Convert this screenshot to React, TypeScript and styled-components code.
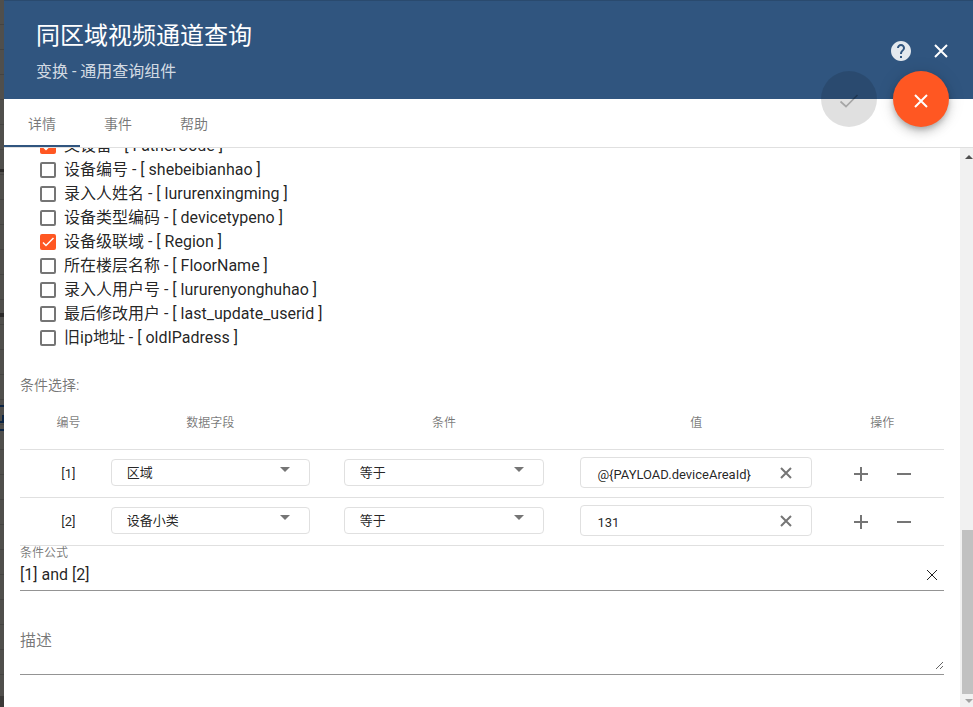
import React, { useState } from "react";
import styled, { createGlobalStyle } from "styled-components";

const navy = "#30557f";
const accent = "#ff5722";
const ink = "rgba(0, 0, 0, 0.87)";
const muted = "rgba(0, 0, 0, 0.54)";
const line = "#e0e0e0";

const GlobalStyle = createGlobalStyle`
  *, *::before, *::after { box-sizing: border-box; }
  html, body, #root { height: 100%; }
  body {
    margin: 0;
    overflow: hidden;
    color: ${ink};
    font-family: Roboto, "Noto Sans CJK SC", sans-serif;
    font-size: 16px;
  }
  button, input, select, textarea { font-family: inherit; color: inherit; }
`;

const Page = styled.div`
  display: flex;
  height: 100vh;
`;

const Backdrop = styled.div`
  flex: 0 0 4px;
  overflow: hidden;
  background:
    linear-gradient(
      transparent 169px, #2b2a29 169px 172px, transparent 172px 313px,
      #2b2a29 313px 317px, transparent 317px 405px,
      #0c2544 405px 407px, transparent 407px 421px,
      #0c2544 421px 423px, transparent 423px 429px,
      #0c2544 429px 431px, transparent 431px 696px, #3b3a38 696px
    ),
    linear-gradient(90deg, transparent 2px, #0c2544 2px) 0 415px / 4px 6px no-repeat,
    repeating-linear-gradient(#504f4c 0 24px, #454442 24px 25px);
`;

const Panel = styled.main`
  flex: 1;
  min-width: 0;
  display: flex;
  flex-direction: column;
  background: #fff;
`;

const Header = styled.header`
  position: relative;
  flex: none;
  display: flex;
  justify-content: space-between;
  align-items: center;
  height: 99px;
  padding: 2px 20px 0 32px;
  color: #fff;
  background: ${navy};
  border-top: 1px solid #2a4a6e;
`;

const Title = styled.h1`
  margin: 0;
  font-size: 24px;
  line-height: 36px;
  font-weight: 400;
`;

const Subtitle = styled.p`
  margin: 4px 0 0;
  font-size: 16px;
  line-height: 28px;
  color: rgba(255, 255, 255, 0.8);
`;

const Heading = styled.div`
  padding-top: 2px;
`;

const HeaderActions = styled.div`
  display: flex;
  gap: 16px;
`;

const IconButton = styled.button<{ $size?: number }>`
  display: inline-flex;
  align-items: center;
  justify-content: center;
  flex: none;
  width: ${({ $size = 24 }) => $size}px;
  height: ${({ $size = 24 }) => $size}px;
  padding: 0;
  border: 0;
  background: none;
  cursor: pointer;
`;

const FabGroup = styled.div`
  position: absolute;
  right: 24px;
  bottom: -28px;
  display: flex;
  gap: 16px;
`;

const Fab = styled.button`
  display: flex;
  align-items: center;
  justify-content: center;
  width: 56px;
  height: 56px;
  padding: 4px 0 0;
  border: 0;
  border-radius: 50%;
  color: #fff;
  background: ${accent};
  box-shadow: 0 3px 5px -1px rgba(0, 0, 0, 0.2), 0 6px 10px rgba(0, 0, 0, 0.14),
    0 1px 18px rgba(0, 0, 0, 0.12);
  &:disabled {
    color: rgba(0, 0, 0, 0.26);
    background: rgba(0, 0, 0, 0.12);
    box-shadow: none;
  }
`;

const Tabs = styled.nav`
  flex: none;
  display: flex;
  height: 49px;
  border-bottom: 1px solid ${line};
`;

const Tab = styled.button<{ $active?: boolean }>`
  height: 48px;
  padding: 2px 24px 0;
  border: 0;
  border-bottom: 2px solid ${({ $active }) => ($active ? navy : "transparent")};
  background: none;
  color: ${muted};
  font-size: 14px;
`;

const Body = styled.div`
  flex: 1;
  min-height: 0;
  display: flex;
`;

const Viewport = styled.div`
  flex: 1;
  min-width: 0;
  display: flex;
  flex-direction: column;
  justify-content: flex-end;
  overflow: hidden;
  padding: 0 16px 32px;
`;

const FieldList = styled.ul`
  list-style: none;
  margin: 0;
  padding: 0 0 0 20px;
`;

const FieldOption = styled.label`
  display: flex;
  align-items: center;
  gap: 8px;
  height: 24px;
  line-height: 24px;
`;

const Tick = styled.input`
  appearance: none;
  width: 16px;
  height: 16px;
  margin: 0;
  border: 2px solid #757575;
  border-radius: 2px;
  &:checked {
    border-color: ${accent};
    background: ${accent};
  }
`;

const TickBox = styled.span`
  display: grid;
  flex: none;
  > * { grid-area: 1 / 1; }
  svg { pointer-events: none; z-index: 1; }
  input:not(:checked) + svg { visibility: hidden; }
`;

const SectionLabel = styled.h2`
  margin: 24px 0 0;
  padding-top: 2px;
  font-size: 14px;
  line-height: 18px;
  font-weight: 400;
  color: ${muted};
`;

const Table = styled.table`
  width: 100%;
  table-layout: fixed;
  border-collapse: separate;
  border-spacing: 0;
`;

const HeadCell = styled.th<{ $width: string }>`
  width: ${({ $width }) => $width};
  height: 56px;
  padding: 0;
  border-bottom: 1px solid ${line};
  font-size: 12px;
  font-weight: 400;
  color: ${muted};
  text-align: center;
  &:first-child { padding-left: 22px; }
  &:last-child { padding-right: 10px; }
`;

const Cell = styled.td`
  height: 48px;
  padding: 0 18px;
  border-bottom: 1px solid ${line};
  font-size: 13px;
  text-align: center;
  &:first-child { padding: 0 0 0 22px; }
  &:nth-child(2) { padding: 0 16px; }
  &:last-child { padding: 0 10px 0 0; }
`;

const Picker = styled.div`
  display: grid;
  align-items: center;
  height: 27px;
  margin-bottom: 2px;
  border: 1px solid ${line};
  border-radius: 4px;
  > * { grid-area: 1 / 1; }
  > svg {
    justify-self: end;
    margin: 0 19px 6px 0;
    pointer-events: none;
  }
`;

const Select = styled.select`
  appearance: none;
  width: 100%;
  height: 25px;
  padding: 0 32px 0 15px;
  border: 0;
  background: none;
  font-size: 13px;
`;

const ValueBox = styled.div`
  display: flex;
  align-items: center;
  height: 31px;
  margin-bottom: 2px;
  padding: 0 16px;
  border: 1px solid ${line};
  border-radius: 4px;
  color: ${muted};
`;

const ValueInput = styled.input`
  flex: 1;
  min-width: 0;
  height: 28px;
  padding: 4px 0 0;
  border: 0;
  outline: 0;
  background: none;
  font-size: 13px;
  color: ${ink};
`;

const RowActions = styled.div`
  display: flex;
  justify-content: center;
  gap: 19px;
  color: ${muted};
`;

const FieldLabel = styled.label`
  display: block;
  font-size: 12px;
  line-height: 14px;
  color: ${muted};
`;

const Underlined = styled.div`
  display: flex;
  align-items: center;
  height: 31px;
  border-bottom: 1px solid #949494;
`;

const FormulaInput = styled.input`
  flex: 1;
  min-width: 0;
  height: 30px;
  padding: 0 0 2px;
  border: 0;
  outline: 0;
  background: none;
  font-size: 16px;
`;

const DescriptionField = styled.div`
  margin-top: 36px;
  padding-bottom: 4px;
  border-bottom: 1px solid #949494;
`;

const Description = styled.textarea`
  display: block;
  width: 100%;
  height: 43px;
  padding: 2px 0 0;
  border: 0;
  outline: 0;
  resize: vertical;
  background: none;
  font-size: 16px;
  line-height: 24px;
  &::placeholder { color: ${muted}; }
`;

const ScrollRail = styled.div`
  flex: 0 0 13px;
  display: flex;
  flex-direction: column;
  overflow: hidden;
  background: #f1f1f1;
`;

const ScrollStep = styled.div<{ $height: number }>`
  flex: none;
  display: grid;
  place-items: center;
  width: 17px;
  height: ${({ $height }) => $height}px;
`;

const ScrollTrack = styled.div`
  flex: 1;
  display: flex;
  align-items: flex-end;
  padding: 0 0 0 2px;
`;

const ScrollThumb = styled.div`
  width: 100%;
  height: 31%;
  background: #c1c1c1;
`;

const CrossIcon = ({ span = 14, stroke = 2 }: { span?: number; stroke?: number }) => (
  <svg width={span} height={span} viewBox={`0 0 ${span} ${span}`} fill="none" stroke="currentColor" strokeWidth={stroke}>
    <path d={`M1 1 L${span - 1} ${span - 1} M${span - 1} 1 L1 ${span - 1}`} />
  </svg>
);

const HelpIcon = () => (
  <svg width="24" height="24" viewBox="0 0 24 24" fill="#fff" fillOpacity="0.87">
    <path d="M12 2C6.48 2 2 6.48 2 12s4.48 10 10 10 10-4.48 10-10S17.52 2 12 2zm1 17h-2v-2h2v2zm2.07-7.75l-.9.92C13.45 12.9 13 13.5 13 15h-2v-.5c0-1.1.45-2.1 1.17-2.83l1.24-1.26c.37-.36.59-.86.59-1.41 0-1.1-.9-2-2-2s-2 .9-2 2H8c0-2.21 1.79-4 4-4s4 1.79 4 4c0 .88-.36 1.68-.93 2.25z" />
  </svg>
);

const CheckIcon = () => (
  <svg width="20" height="16" viewBox="0 0 20 16" fill="none" stroke="currentColor" strokeWidth="1.7">
    <path d="M1.5 8.5 L7 13.5 L18.5 2" />
  </svg>
);

const TickMark = () => (
  <svg width="16" height="16" viewBox="0 0 16 16" fill="none" stroke="#fff" strokeWidth="1.5">
    <path d="M3 8.5 L6 11.5 L13.5 4" />
  </svg>
);

const DropIcon = () => (
  <svg width="10" height="5" viewBox="0 0 10 5" fill="#757575">
    <path d="M0 0H10L5 5Z" />
  </svg>
);

const SignIcon = ({ plus }: { plus?: boolean }) => (
  <svg width="14" height="14" viewBox="0 0 14 14" fill="currentColor">
    <path d={plus ? "M6 0H8V6H14V8H8V14H6V8H0V6H6Z" : "M0 6H14V8H0Z"} />
  </svg>
);

const ScrollArrow = ({ down }: { down?: boolean }) => (
  <svg width="8" height="4" viewBox="0 0 8 4" fill={down ? "#a3a3a3" : "#505050"}>
    <path d={down ? "M0 0H8L4 4Z" : "M0 4H8L4 0Z"} />
  </svg>
);

const fields = [
  { name: "父设备", code: "FatherCode", checked: true },
  { name: "设备编号", code: "shebeibianhao" },
  { name: "录入人姓名", code: "lururenxingming" },
  { name: "设备类型编码", code: "devicetypeno" },
  { name: "设备级联域", code: "Region", checked: true },
  { name: "所在楼层名称", code: "FloorName" },
  { name: "录入人用户号", code: "lururenyonghuhao" },
  { name: "最后修改用户", code: "last_update_userid" },
  { name: "旧ip地址", code: "oldIPadress" },
];

const columns = [
  { title: "编号", width: "8.1%" },
  { title: "数据字段", width: "25%" },
  { title: "条件", width: "25.6%" },
  { title: "值", width: "29%" },
  { title: "操作", width: "12.3%" },
];

const initialRules = [
  { field: "区域", operator: "等于", value: "@{PAYLOAD.deviceAreaId}" },
  { field: "设备小类", operator: "等于", value: "131" },
];

export default function App() {
  const [rules, setRules] = useState(initialRules);
  const [formula, setFormula] = useState("[1] and [2]");
  const [activeTab, setActiveTab] = useState("详情");

  const setValue = (index: number, value: string) =>
    setRules(rules.map((rule, i) => (i === index ? { ...rule, value } : rule)));

  return (
    <Page>
      <GlobalStyle />
      <Backdrop />
      <Panel>
        <Header>
          <Heading>
            <Title>同区域视频通道查询</Title>
            <Subtitle>变换 - 通用查询组件</Subtitle>
          </Heading>
          <HeaderActions>
            <IconButton aria-label="帮助"><HelpIcon /></IconButton>
            <IconButton aria-label="关闭"><CrossIcon /></IconButton>
          </HeaderActions>
          <FabGroup>
            <Fab disabled aria-label="确定"><CheckIcon /></Fab>
            <Fab aria-label="取消"><CrossIcon /></Fab>
          </FabGroup>
        </Header>
        <Tabs>
          {["详情", "事件", "帮助"].map((tab) => (
            <Tab key={tab} $active={tab === activeTab} onClick={() => setActiveTab(tab)}>{tab}</Tab>
          ))}
        </Tabs>
        <Body>
          <Viewport>
            <FieldList>
              {fields.map(({ name, code, checked }) => (
                <li key={code}>
                  <FieldOption>
                    <TickBox>
                      <Tick type="checkbox" defaultChecked={checked} />
                      <TickMark />
                    </TickBox>
                    {`${name} - [ ${code} ]`}
                  </FieldOption>
                </li>
              ))}
            </FieldList>
            <SectionLabel>条件选择:</SectionLabel>
            <Table>
              <thead>
                <tr>
                  {columns.map(({ title, width }) => (
                    <HeadCell key={title} $width={width}>{title}</HeadCell>
                  ))}
                </tr>
              </thead>
              <tbody>
                {rules.map((rule, index) => (
                  <tr key={index}>
                    <Cell>{`[${index + 1}]`}</Cell>
                    <Cell>
                      <Picker>
                        <Select aria-label="数据字段" defaultValue={rule.field}>
                          <option>区域</option>
                          <option>设备小类</option>
                        </Select>
                        <DropIcon />
                      </Picker>
                    </Cell>
                    <Cell>
                      <Picker>
                        <Select aria-label="条件" defaultValue={rule.operator}>
                          <option>等于</option>
                        </Select>
                        <DropIcon />
                      </Picker>
                    </Cell>
                    <Cell>
                      <ValueBox>
                        <ValueInput aria-label="值" value={rule.value} onChange={(e) => setValue(index, e.target.value)} />
                        <IconButton $size={18} aria-label="清除" onClick={() => setValue(index, "")}><CrossIcon span={12} /></IconButton>
                      </ValueBox>
                    </Cell>
                    <Cell>
                      <RowActions>
                        <IconButton aria-label="添加"><SignIcon plus /></IconButton>
                        <IconButton aria-label="删除"><SignIcon /></IconButton>
                      </RowActions>
                    </Cell>
                  </tr>
                ))}
              </tbody>
            </Table>
            <FieldLabel htmlFor="formula">条件公式</FieldLabel>
            <Underlined>
              <FormulaInput id="formula" value={formula} onChange={(e) => setFormula(e.target.value)} />
              <IconButton aria-label="清除公式" onClick={() => setFormula("")}><CrossIcon span={12} stroke={1} /></IconButton>
            </Underlined>
            <DescriptionField>
              <Description aria-label="描述" placeholder="描述" />
            </DescriptionField>
          </Viewport>
          <ScrollRail>
            <ScrollStep $height={17}><ScrollArrow /></ScrollStep>
            <ScrollTrack><ScrollThumb /></ScrollTrack>
            <ScrollStep $height={13}><ScrollArrow down /></ScrollStep>
          </ScrollRail>
        </Body>
      </Panel>
    </Page>
  );
}
